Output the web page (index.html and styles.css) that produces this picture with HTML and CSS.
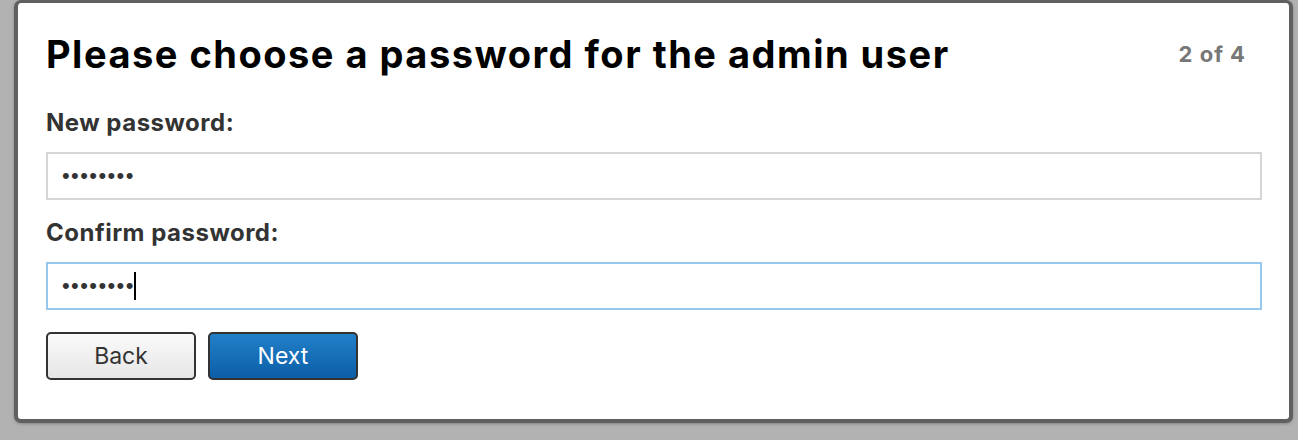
FILE: index.html
```html
<!DOCTYPE html>
<html lang="en">
<head>
  <meta charset="UTF-8">
  <title>Setup - Admin password</title>
  <link rel="stylesheet" href="styles.css">
</head>
<body>
  <div class="dialog">
    <div class="dialog-head">
      <h1>Please choose a password for the admin user</h1>
      <span class="step">2 of 4</span>
    </div>

    <form class="pw-form" onsubmit="return false">
      <label for="pw1">New password:</label>
      <input id="pw1" class="field" type="password" value="secret12">

      <label for="pw2">Confirm password:</label>
      <div class="field-wrap">
        <input id="pw2" class="field active" type="password" value="secret12">
        <!-- fake caret, headless shots don't show the real one -->
        <span class="caret"></span>
      </div>

      <div class="actions">
        <button type="button" class="btn">Back</button>
        <button type="submit" class="btn primary">Next</button>
      </div>
    </form>
  </div>
</body>
</html>
```

FILE: styles.css
```css
body, html {
  margin: 0;
  padding: 0;
  width: 100%;
  height: 100%;
  background-color: #b2b2b2;
  overflow: hidden;
}
body {
  font-family: "Inter", "Liberation Sans", sans-serif;
}
.dialog {
  box-sizing: border-box;
  width: 1279px;
  height: 423px;
  margin-left: 14px;
  background: #fff;
  border: 4px solid #606060;
  border-top-width: 3px;
  border-radius: 7px;
  padding: 0 27px 0 28px;
  box-shadow: 0 1px 3px rgba(0, 0, 0, 0.25);
}
.dialog-head {
  display: flex;
  justify-content: space-between;
  align-items: center;
  height: 101px;
}
.dialog-head h1 {
  margin: 0;
  font-size: 38px;
  font-weight: 700;
  color: #000;
  letter-spacing: 1.5px;
}
.step {
  font-size: 22px;
  font-weight: 700;
  color: #777;
  letter-spacing: 1px;
  margin-right: 16px;
}
.pw-form {
  display: flex;
  flex-direction: column;
  padding-top: 4px;
}
.pw-form label {
  font-size: 24px;
  font-weight: 700;
  color: #333;
  letter-spacing: 0.5px;
  line-height: 30px;
  margin-bottom: 14px;
}
.field {
  box-sizing: border-box;
  width: 100%;
  height: 48px;
  margin: 0 0 18px 0;
  padding: 0 14px;
  border: 2px solid #d6d6d6;
  background: #fff;
  font-family: "Liberation Sans", sans-serif;
  font-size: 22px;
  letter-spacing: 1.4px;
  color: #333;
  outline: none;
}
.field.active {
  border-color: #96c8ee;
}
.field-wrap {
  position: relative;
}
.caret {
  position: absolute;
  left: 88px;
  top: 10px;
  width: 2px;
  height: 28px;
  background: #000;
}
.actions {
  display: flex;
  gap: 12px;
  margin-top: 4px;
}
.btn {
  width: 150px;
  height: 48px;
  border: 2px solid #333;
  border-radius: 5px;
  font-family: "Inter", "Liberation Sans", sans-serif;
  font-size: 23px;
  color: #333;
  background: linear-gradient(#fafafa, #e6e6e6);
  cursor: pointer;
}
.btn.primary {
  color: #fff;
  background: linear-gradient(#2280c8, #0c5ea8);
}
```
